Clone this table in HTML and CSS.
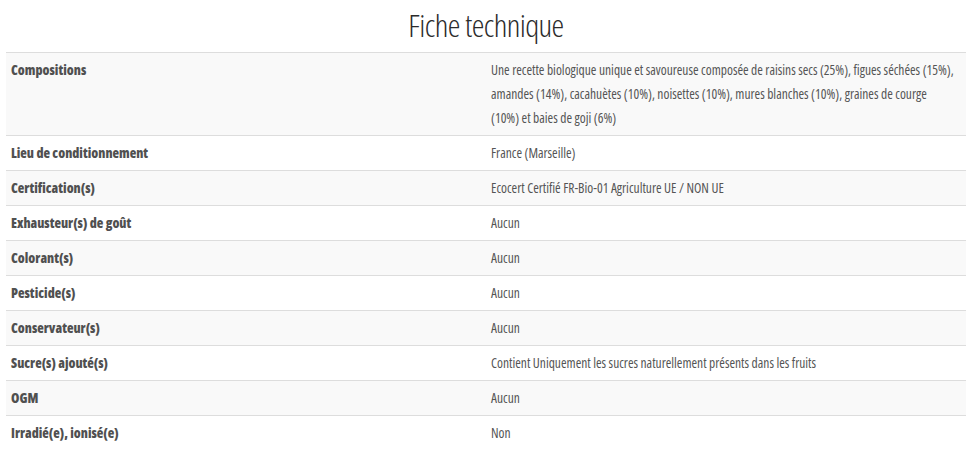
FILE: index.html
```html
<!DOCTYPE html>
<html lang="fr">
<head>
<meta charset="utf-8">
<title>Fiche technique</title>
<link rel="stylesheet" href="styles.css">
</head>
<body>
<section class="sheet">
  <h2 class="sheet-title">Fiche technique</h2>
  <table class="specs">
    <colgroup><col class="col-label"><col class="col-value"></colgroup>
    <tbody>
      <tr><th>Compositions</th><td>Une recette biologique unique et savoureuse composée de raisins secs (25%), figues séchées (15%), amandes (14%), cacahuètes (10%), noisettes (10%), mures blanches (10%), graines de courge (10%) et baies de goji (6%)</td></tr>
      <tr><th>Lieu de conditionnement</th><td>France (Marseille)</td></tr>
      <tr><th>Certification(s)</th><td>Ecocert Certifié FR-Bio-01 Agriculture UE / NON UE</td></tr>
      <tr><th>Exhausteur(s) de goût</th><td>Aucun</td></tr>
      <tr><th>Colorant(s)</th><td>Aucun</td></tr>
      <tr><th>Pesticide(s)</th><td>Aucun</td></tr>
      <tr><th>Conservateur(s)</th><td>Aucun</td></tr>
      <tr><th>Sucre(s) ajouté(s)</th><td>Contient Uniquement les sucres naturellement présents dans les fruits</td></tr>
      <tr><th>OGM</th><td>Aucun</td></tr>
      <tr><th>Irradié(e), ionisé(e)</th><td>Non</td></tr>
    </tbody>
  </table>
</section>
</body>
</html>
```
FILE: styles.css
```css
html, body { margin: 0; padding: 0; background: #fff; }
body { font-family: "Open Sans", "Liberation Sans", sans-serif; font-stretch: 75%; color: #555; }
.sheet { padding: 5px 9px 0 6px; }
.sheet-title {
  margin: 0 0 7px;
  text-align: center;
  font-size: 32px;
  line-height: 40px;
  font-weight: 300;
  letter-spacing: -0.6px;
  color: #2b2b2b;
}
.specs { width: 960px; border-collapse: collapse; table-layout: fixed; }
.col-label, .col-value { width: 480px; }
.specs th, .specs td {
  padding: 5px;
  line-height: 24px;
  vertical-align: top;
  text-align: left;
  border-top: 1px solid #dddddd;
}
.specs th { font-size: 13.5px; font-weight: 800; color: #505050; }
.specs td { font-size: 13.5px; font-weight: 400; color: #555; padding-right: 11px; }
.specs tr:nth-child(odd) { background: #f9f9f9; }
```
